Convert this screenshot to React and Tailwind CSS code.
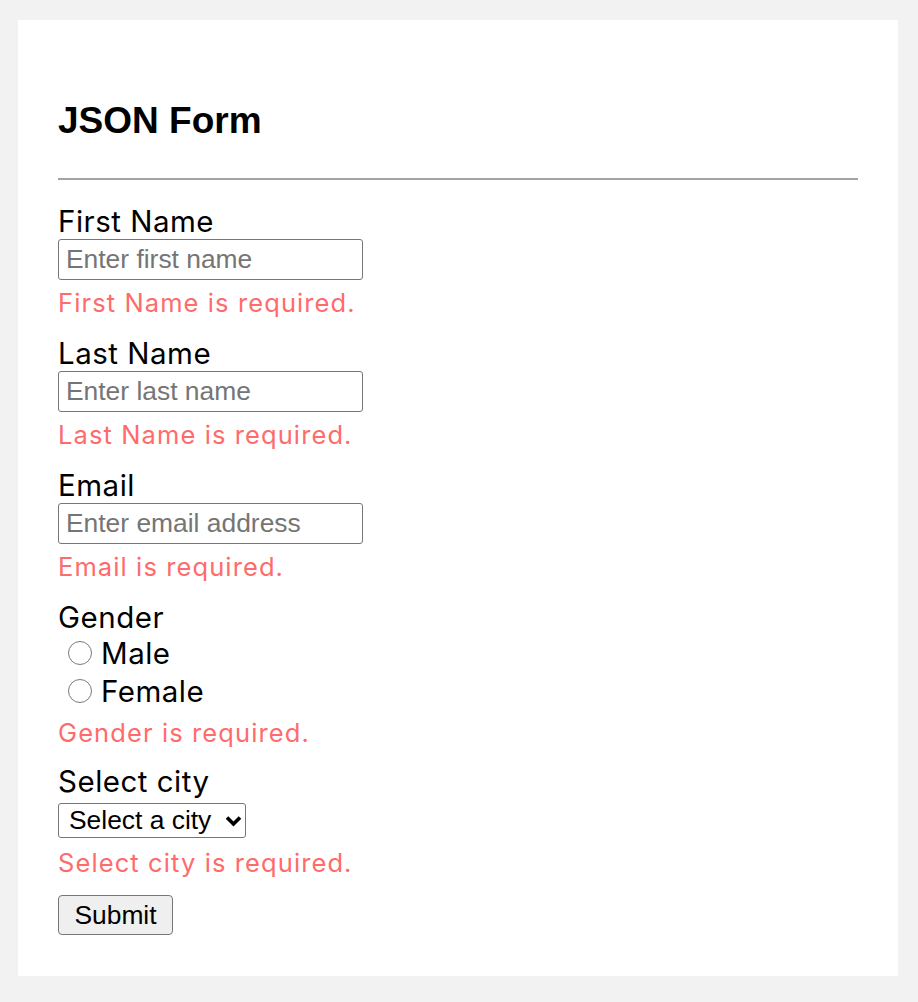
import { useState } from "react";

const fields = [
  { name: "firstName", label: "First Name", placeholder: "Enter first name" },
  { name: "lastName", label: "Last Name", placeholder: "Enter last name" },
  { name: "email", label: "Email", placeholder: "Enter email address" },
];

function Label({ children }) {
  return (
    <label className="block text-[29.5px] leading-[33px] tracking-[0.5px] text-black font-['Inter',sans-serif]">
      {children}
    </label>
  );
}

function Error({ children, className = "" }) {
  return (
    <div className={`text-[25.5px] leading-[29px] tracking-[1.1px] text-[#ff6b6b] font-['Inter',sans-serif] ${className}`}>
      {children}
    </div>
  );
}

export default function App() {
  const [values, setValues] = useState({});

  const update = (name) => (e) => setValues({ ...values, [name]: e.target.value });

  return (
    <div className="min-h-screen bg-[#f2f2f2] pt-5 pl-[18px] pr-[20px] pb-[26px]">
      <div className="bg-white p-10 pb-[41px]">
        {/* Heading */}
        <h1 className="mt-[43px] text-[37px] leading-[36px] font-bold text-black font-['Liberation_Sans',Arial,sans-serif]">
          JSON Form
        </h1>
        <hr className="mt-[39px] border-0 h-[2px] bg-[#a3a3a3]" />

        <form className="mt-[25px]" onSubmit={(e) => e.preventDefault()}>
          {fields.map((f) => (
            <div key={f.name} className="mb-[20px]">
              <Label>{f.label}</Label>
              <input
                type="text"
                value={values[f.name] || ""}
                onChange={update(f.name)}
                placeholder={f.placeholder}
                className="block w-[305px] h-[41px] mt-[1px] px-[7px] border-[1.5px] border-[#767676] rounded-[3px] text-[26.4px] text-black placeholder:text-[#757575] font-['Liberation_Sans',Arial,sans-serif] outline-none"
              />
              <Error className="mt-[8px]">{f.label} is required.</Error>
            </div>
          ))}

          {/* Gender */}
          <div className="mb-[18px]">
            <Label>Gender</Label>
            {["Male", "Female"].map((g) => (
              <label key={g} className="flex items-center h-[38px] font-['Inter',sans-serif] text-[29.5px] tracking-[0.5px] text-black">
                <span className="ml-[10px] mr-[9px] w-[24px] h-[24px] rounded-full border-[1.5px] border-[#7a7a7a] bg-white shrink-0" />
                {g}
              </label>
            ))}
            <Error className="mt-[8px]">Gender is required.</Error>
          </div>

          {/* City */}
          <div>
            <Label>Select city</Label>
            <div className="mt-[5px] flex items-center w-[188px] h-[35px] pl-[10px] pr-[3px] border-[1.5px] border-[#767676] rounded-[3px] text-[26.4px] text-black font-['Liberation_Sans',Arial,sans-serif]">
              <span className="flex-1 leading-none">Select a city</span>
              <svg width="17" height="12" viewBox="0 0 17 12" className="shrink-0">
                <path d="M2 2.5 L8.5 9 L15 2.5" fill="none" stroke="black" strokeWidth="3.6" />
              </svg>
            </div>
            <Error className="mt-[10px]">Select city is required.</Error>
          </div>

          <button
            type="submit"
            className="mt-[18px] block w-[115px] h-[40px] bg-[#efefef] border-[1.5px] border-[#767676] rounded-[4px] text-[26.4px] text-black font-['Liberation_Sans',Arial,sans-serif]"
          >
            Submit
          </button>
        </form>
      </div>
    </div>
  );
}
